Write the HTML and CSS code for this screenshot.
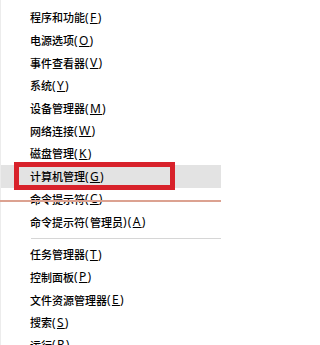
FILE: index.html
```html
<!DOCTYPE html>
<html lang="zh-CN">
<head>
<meta charset="utf-8">
<link rel="stylesheet" href="styles.css">
</head>
<body>
<div class="menu">
  <div class="item">程序和功能<span class="k">(<u>F</u>)</span></div>
  <div class="item">电源选项<span class="k">(<u>O</u>)</span></div>
  <div class="item">事件查看器<span class="k">(<u>V</u>)</span></div>
  <div class="item">系统<span class="k">(<u>Y</u>)</span></div>
  <div class="item">设备管理器<span class="k">(<u>M</u>)</span></div>
  <div class="item">网络连接<span class="k">(<u>W</u>)</span></div>
  <div class="item">磁盘管理<span class="k">(<u>K</u>)</span></div>
  <div class="item active">计算机管理<span class="k">(<u>G</u>)</span></div>
  <div class="item">命令提示符<span class="k">(<u>C</u>)</span></div>
  <div class="item">命令提示符<span class="k">(</span>管理员<span class="k">)(<u>A</u>)</span></div>
  <div class="sep"></div>
  <div class="item">任务管理器<span class="k">(<u>T</u>)</span></div>
  <div class="item">控制面板<span class="k">(<u>P</u>)</span></div>
  <div class="item">文件资源管理器<span class="k">(<u>E</u>)</span></div>
  <div class="item">搜索<span class="k">(<u>S</u>)</span></div>
  <div class="item">运行<span class="k">(<u>R</u>)</span></div>
  <div class="redbox"></div>
  <div class="redline"></div>
</div>
</body>
</html>
```
FILE: styles.css
```css
html, body {
  margin: 0;
  padding: 0;
  background: #fff;
}
body {
  width: 221px;
  height: 345px;
  overflow: hidden;
}
.menu {
  position: relative;
  display: flex;
  flex-direction: column;
  padding-top: 6px;
  border-left: 1px solid #ececec;
  height: 100%;
  box-sizing: border-box;
  font-family: "Noto Sans CJK SC", sans-serif;
  font-size: 11px;
  font-weight: 500;
  color: #000;
}
.item {
  flex: 0 0 22.7px;
  height: 22.7px;
  display: flex;
  align-items: center;
  padding-left: 29px;
  white-space: nowrap;
}
.k {
  font-family: "Noto Sans", "Noto Sans CJK SC", sans-serif;
  font-size: 12px;
  font-weight: 400;
  letter-spacing: 1.3px;
}
.k u {
  text-underline-offset: 1px;
}
.item.active {
  background: #e3e3e3;
}
.sep {
  flex: 0 0 1px;
  margin: 5px 0 4px 30px;
  background: #d6d6d6;
}
.redbox {
  position: absolute;
  left: 13px;
  top: 162px;
  width: 161px;
  height: 28px;
  border: 5px solid #d8222b;
  box-sizing: border-box;
}
.redline {
  position: absolute;
  left: -1px;
  right: 0;
  top: 200px;
  height: 2px;
  background: #dca291;
}
```
